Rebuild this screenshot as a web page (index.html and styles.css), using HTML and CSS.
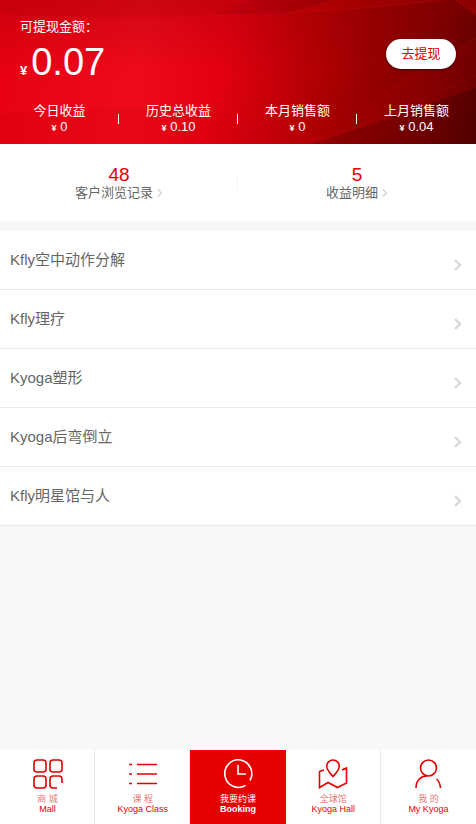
FILE: index.html
```html
<!DOCTYPE html>
<html lang="zh-CN">
<head>
<meta charset="utf-8">
<meta name="viewport" content="width=device-width, initial-scale=1">
<title>Kyoga</title>
<link rel="stylesheet" href="styles.css">
</head>
<body>
<header class="wallet">
  <svg class="wallet-art" viewBox="0 0 476 144" preserveAspectRatio="none" aria-hidden="true">
    <path d="M0 14Q120 20 212 15L250 0H0Z" fill="#900" opacity=".12"/>
    <path d="M212 15L250 0H336L290 13Z" fill="#500" opacity=".12"/>
    <path d="M290 13L336 0H455L380 7Z" fill="#f00" opacity=".1"/>
    <path d="M476 16L455 0H476Z" fill="#f00" opacity=".2"/>
    <path d="M0 114Q60 106 150 107T290 128L340 144H0Z" fill="#c00010" opacity=".15"/>
    <path d="M336 136L476 88V144H310Z" fill="#300" opacity=".2"/>
    <path d="M380 94L476 38V88L336 136Z" fill="#a00" opacity=".2"/>
    <path d="M0 114Q60 106 150 107T290 128L340 144M110 84Q140 95 190 98M212 15Q340 13 436 0M220 41L290 13L336 0M336 136L476 76M380 94L476 38M455 0L476 12" fill="none" stroke="#f02030" opacity=".15"/>
  </svg>
  <div class="balance">
    <div>
      <p class="balance-label">可提现金额：</p>
      <p class="balance-value"><span class="yen">¥</span>0.07</p>
    </div>
    <button class="withdraw" type="button">去提现</button>
  </div>
  <ul class="stats">
    <li>今日收益<span class="amount"><span class="yen">¥</span> 0</span></li>
    <li>历史总收益<span class="amount"><span class="yen">¥</span> 0.10</span></li>
    <li>本月销售额<span class="amount"><span class="yen">¥</span> 0</span></li>
    <li>上月销售额<span class="amount"><span class="yen">¥</span> 0.04</span></li>
  </ul>
</header>
<main>
  <div class="records">
    <a href="#"><span class="count">48</span><span class="record-name">客户浏览记录<svg class="chevron" viewBox="0 0 8 12"><path d="M1 1L6 6L1 11"/></svg></span></a>
    <a href="#"><span class="count">5</span><span class="record-name">收益明细<svg class="chevron" viewBox="0 0 8 12"><path d="M1 1L6 6L1 11"/></svg></span></a>
  </div>
  <nav class="topics">
    <a href="#">Kfly空中动作分解<svg class="chevron" viewBox="0 0 8 12"><path d="M1 1L6 6L1 11"/></svg></a>
    <a href="#">Kfly理疗<svg class="chevron" viewBox="0 0 8 12"><path d="M1 1L6 6L1 11"/></svg></a>
    <a href="#">Kyoga塑形<svg class="chevron" viewBox="0 0 8 12"><path d="M1 1L6 6L1 11"/></svg></a>
    <a href="#">Kyoga后弯倒立<svg class="chevron" viewBox="0 0 8 12"><path d="M1 1L6 6L1 11"/></svg></a>
    <a href="#">Kfly明星馆与人<svg class="chevron" viewBox="0 0 8 12"><path d="M1 1L6 6L1 11"/></svg></a>
  </nav>
</main>
<nav class="tabs">
  <a href="#">
    <svg viewBox="0 0 30 30"><rect x="1" y="1" width="12" height="12" rx="3"/><rect x="17" y="1" width="12" height="12" rx="3"/><rect x="1" y="17" width="12" height="12" rx="3"/><path d="M24 29H20Q17 29 17 26V20Q17 17 20 17H26Q29 17 29 20V24"/></svg>
    <span class="zh">商 城</span><span>Mall</span>
  </a>
  <a href="#">
    <svg viewBox="0 0 30 30"><path d="M1 5.500H4M9 5.500H29M1 15H4M9 15H29M1 24.500H4M9 24.500H29"/></svg>
    <span class="zh">课 程</span><span>Kyoga Class</span>
  </a>
  <a class="active" href="#" aria-current="page">
    <svg viewBox="0 0 30 30"><path d="M22.500 26.300A13.500 13.800 0 1 1 27 21.500M15 6V15H23"/></svg>
    <span class="zh">我要约课</span><span class="en">Booking</span>
  </a>
  <a href="#">
    <svg viewBox="0 0 30 30"><path d="M15 17.500C12 14 8.700 11 8.700 7.300A6.300 6.300 0 0 1 21.300 7.300C21.300 11 18 14 15 17.500ZM6 11L1.500 12.500V28.500L10 23.500L19.500 28.500L28.500 24V9L24 11"/></svg>
    <span class="zh">全球馆</span><span>Kyoga Hall</span>
  </a>
  <a href="#">
    <svg viewBox="0 0 30 30"><circle cx="15.500" cy="9" r="8"/><path d="M3 29C3 21 8 17 14 17M23.500 20Q27 23 27.500 29"/></svg>
    <span class="zh">我 的</span><span>My Kyoga</span>
  </a>
</nav>
</body>
</html>
```
FILE: styles.css
```css
* {
  box-sizing: border-box;
}

body {
  margin: 0;
  min-height: 100vh;
  display: flex;
  flex-direction: column;
  background: #f8f8f8;
  color: #666;
  font: 13px/16px "Liberation Sans", "Noto Sans CJK SC", sans-serif;
}

p,
ul {
  margin: 0;
  padding: 0;
}

a {
  color: inherit;
  text-decoration: none;
}

svg {
  fill: none;
  stroke: currentColor;
}

.wallet {
  position: relative;
  padding: 19px 0 9px;
  color: #fff;
  background:
    linear-gradient(180deg, rgba(130, 0, 0, 0.25), rgba(130, 0, 0, 0) 50%),
    linear-gradient(100deg, #e60012 0%, #ee0a1c 30%, #e40012 46%, #c00008 60%, #9c0000 74%, #800000 88%, #580000 100%);
}

.wallet-art {
  position: absolute;
  inset: 0;
  width: 100%;
  height: 100%;
  stroke: none;
}

.balance {
  position: relative;
  display: flex;
  justify-content: space-between;
  align-items: center;
  padding: 0 20px;
}

.balance-value {
  font-size: 38px;
  line-height: 54px;
}

.yen {
  font-size: 9px;
  font-weight: bold;
  line-height: 1;
}

.balance-value .yen {
  margin-right: 4px;
  font-size: 13px;
}

.withdraw {
  width: 70px;
  height: 30px;
  padding: 0;
  border: 0;
  border-radius: 15px;
  background: #fff;
  color: #e60000;
  font: inherit;
  box-shadow: 0 1px 3px rgba(0, 0, 0, 0.5);
}

.stats {
  position: relative;
  display: grid;
  grid-template-columns: repeat(4, 1fr);
  margin-top: 14px;
  list-style: none;
  text-align: center;
}

.stats li {
  display: flex;
  flex-direction: column;
  background: linear-gradient(#fff, #fff) right 11px / 1px 10px no-repeat;
}

.stats li:last-child {
  background: none;
}

.records {
  display: grid;
  grid-template-columns: 1fr 1fr;
  padding: 20px 0;
  background: #fff;
  text-align: center;
}

.records a {
  display: flex;
  flex-direction: column;
}

.records a:first-child {
  background: linear-gradient(#f2f2f2, #f2f2f2) right 14px / 1px 10px no-repeat;
}

.count {
  color: #e60000;
  font-size: 19px;
  line-height: 21px;
}

.chevron {
  stroke: #d8d8d8;
  stroke-width: 2.4;
}

.record-name .chevron {
  width: 6px;
  height: 8px;
  margin-left: 4px;
}

.topics {
  margin-top: 10px;
}

.topics a {
  display: flex;
  justify-content: space-between;
  padding: 18px 14px 18px 10px;
  border-bottom: 1px solid #ebebeb;
  background: #fff;
  font-size: 15px;
  line-height: 22px;
}

.topics .chevron {
  align-self: flex-end;
  width: 8px;
  height: 12px;
}

.tabs {
  display: grid;
  grid-template-columns: repeat(5, 1fr);
  margin-top: auto;
  background: #fff;
  color: #e60000;
  font-size: 9px;
  line-height: 10px;
}

.tabs a {
  display: flex;
  flex-direction: column;
  align-items: center;
  padding: 9px 0 10px;
  box-shadow: inset -1px 0 #ebebeb;
}

.tabs a:last-child {
  box-shadow: none;
}

.tabs svg {
  width: 30px;
  height: 30px;
  margin-bottom: 5px;
  stroke-width: 1.6;
}

.tabs .zh {
  color: #e87878;
}

.tabs .active {
  background: #e60000;
  box-shadow: none;
  color: #fff;
}

.tabs .active .zh {
  color: #fff;
}

.tabs .en {
  font-weight: bold;
}
```
